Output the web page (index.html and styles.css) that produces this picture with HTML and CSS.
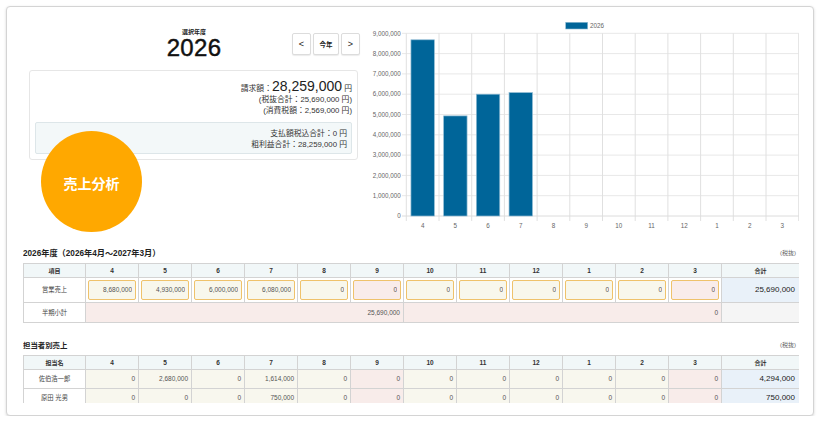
FILE: index.html
```html
<!DOCTYPE html>
<html lang="ja">
<head>
<meta charset="utf-8">
<title>売上分析</title>
<link rel="stylesheet" href="styles.css">
</head>
<body>
<div class="card">
  <div class="content">
    <section class="top">
      <div class="left">
        <div class="yearhead">
          <div></div>
          <div class="yeartitle">
            <div class="ylabel">選択年度</div>
            <div class="year">2026</div>
          </div>
          <div class="btns">
            <button class="btn arrow">&lt;</button><button class="btn today">今年</button><button class="btn arrow">&gt;</button>
          </div>
        </div>
        <div class="summary">
          <div class="bigline"><span class="lbl">請求額：</span><span class="big">28,259,000</span><span class="yen"> 円</span></div>
          <div class="sline">(税抜合計：25,690,000 円)</div>
          <div class="sline">(消費税額：2,569,000 円)</div>
          <div class="inner">
            <div class="sline">支払額税込合計：0 円</div>
            <div class="sline">粗利益合計：28,259,000 円</div>
          </div>
        </div>
        <div class="badge">売上分析</div>
      </div>
      <svg class="chart" width="439" height="239" viewBox="360 7 439 239" xmlns="http://www.w3.org/2000/svg">
        <g class="legend">
          <rect x="565.7" y="22.3" width="22" height="6.7" fill="#006599" stroke="#8fbbd3" stroke-width="0.6"/>
          <text x="590" y="27.9" class="lt">2026</text>
        </g>
        <g stroke="#e8e8e8" stroke-width="1">
          <line x1="402" y1="33.3" x2="798.7" y2="33.3"/>
          <line x1="402" y1="53.6" x2="798.7" y2="53.6"/>
          <line x1="402" y1="73.9" x2="798.7" y2="73.9"/>
          <line x1="402" y1="94.2" x2="798.7" y2="94.2"/>
          <line x1="402" y1="114.5" x2="798.7" y2="114.5"/>
          <line x1="402" y1="134.8" x2="798.7" y2="134.8"/>
          <line x1="402" y1="155.1" x2="798.7" y2="155.1"/>
          <line x1="402" y1="175.4" x2="798.7" y2="175.4"/>
          <line x1="402" y1="195.7" x2="798.7" y2="195.7"/>
        </g>
        <g stroke="#e0e0e0" stroke-width="1">
          <line x1="406.3" y1="33.3" x2="406.3" y2="221"/>
          <line x1="439.0" y1="33.3" x2="439.0" y2="221"/>
          <line x1="471.7" y1="33.3" x2="471.7" y2="221"/>
          <line x1="504.4" y1="33.3" x2="504.4" y2="221"/>
          <line x1="537.1" y1="33.3" x2="537.1" y2="221"/>
          <line x1="569.8" y1="33.3" x2="569.8" y2="221"/>
          <line x1="602.5" y1="33.3" x2="602.5" y2="221"/>
          <line x1="635.2" y1="33.3" x2="635.2" y2="221"/>
          <line x1="667.9" y1="33.3" x2="667.9" y2="221"/>
          <line x1="700.6" y1="33.3" x2="700.6" y2="221"/>
          <line x1="733.3" y1="33.3" x2="733.3" y2="221"/>
          <line x1="766.0" y1="33.3" x2="766.0" y2="221"/>
          <line x1="798.7" y1="33.3" x2="798.7" y2="221"/>
        </g>
        <line x1="402" y1="216" x2="798.7" y2="216" stroke="#dcdcdc" stroke-width="1"/>
        <g class="yl" text-anchor="end">
          <text x="400.7" y="218.2">0</text>
          <text x="400.7" y="197.9">1,000,000</text>
          <text x="400.7" y="177.6">2,000,000</text>
          <text x="400.7" y="157.3">3,000,000</text>
          <text x="400.7" y="137.0">4,000,000</text>
          <text x="400.7" y="116.7">5,000,000</text>
          <text x="400.7" y="96.4">6,000,000</text>
          <text x="400.7" y="76.1">7,000,000</text>
          <text x="400.7" y="55.8">8,000,000</text>
          <text x="400.7" y="35.5">9,000,000</text>
        </g>
        <g class="xl" text-anchor="middle">
          <text x="422.65" y="227.6">4</text>
          <text x="455.35" y="227.6">5</text>
          <text x="488.05" y="227.6">6</text>
          <text x="520.75" y="227.6">7</text>
          <text x="553.45" y="227.6">8</text>
          <text x="586.15" y="227.6">9</text>
          <text x="618.85" y="227.6">10</text>
          <text x="651.55" y="227.6">11</text>
          <text x="684.25" y="227.6">12</text>
          <text x="716.95" y="227.6">1</text>
          <text x="749.65" y="227.6">2</text>
          <text x="782.35" y="227.6">3</text>
        </g>
        <g fill="#006599" stroke="#8fbbd3" stroke-width="0.7">
          <rect x="410.95" y="39.8" width="23.4" height="176.2"/>
          <rect x="443.65" y="115.9" width="23.4" height="100.1"/>
          <rect x="476.35" y="94.2" width="23.4" height="121.8"/>
          <rect x="509.05" y="92.6" width="23.4" height="123.4"/>
        </g>
      </svg>
    </section>

    <section class="block">
      <div class="sec-head">
        <div class="sec-title">2026年度（2026年4月～2027年3月）</div>
        <div class="note">(税抜)</div>
      </div>
      <table class="grid">
        <colgroup><col class="c0"><col class="m"><col class="m"><col class="m"><col class="m"><col class="m"><col class="m"><col class="m"><col class="m"><col class="m"><col class="m"><col class="m"><col class="m"><col class="t"></colgroup>
        <thead>
          <tr class="hr"><th>項目</th><th>4</th><th>5</th><th>6</th><th>7</th><th>8</th><th>9</th><th>10</th><th>11</th><th>12</th><th>1</th><th>2</th><th>3</th><th>合計</th></tr>
        </thead>
        <tbody>
          <tr class="r-in">
            <td class="lbl">営業売上</td>
            <td class="ic"><input class="inp" value="8,680,000" readonly></td>
            <td class="ic"><input class="inp" value="4,930,000" readonly></td>
            <td class="ic"><input class="inp" value="6,000,000" readonly></td>
            <td class="ic"><input class="inp" value="6,080,000" readonly></td>
            <td class="ic"><input class="inp" value="0" readonly></td>
            <td class="ic"><input class="inp pk" value="0" readonly></td>
            <td class="ic"><input class="inp" value="0" readonly></td>
            <td class="ic"><input class="inp" value="0" readonly></td>
            <td class="ic"><input class="inp" value="0" readonly></td>
            <td class="ic"><input class="inp" value="0" readonly></td>
            <td class="ic"><input class="inp" value="0" readonly></td>
            <td class="ic"><input class="inp pk" value="0" readonly></td>
            <td class="tot">25,690,000</td>
          </tr>
          <tr class="r-sub">
            <td class="lbl">半期小計</td>
            <td class="num pkc" colspan="6">25,690,000</td>
            <td class="num pkc" colspan="6">0</td>
            <td class="gry"></td>
          </tr>
        </tbody>
      </table>
    </section>

    <section class="block second">
      <div class="sec-head">
        <div class="sec-title">担当者別売上</div>
        <div class="note">(税抜)</div>
      </div>
      <table class="grid">
        <colgroup><col class="c0"><col class="m"><col class="m"><col class="m"><col class="m"><col class="m"><col class="m"><col class="m"><col class="m"><col class="m"><col class="m"><col class="m"><col class="m"><col class="t"></colgroup>
        <thead>
          <tr class="hr"><th>担当名</th><th>4</th><th>5</th><th>6</th><th>7</th><th>8</th><th>9</th><th>10</th><th>11</th><th>12</th><th>1</th><th>2</th><th>3</th><th>合計</th></tr>
        </thead>
        <tbody>
          <tr class="r-p">
            <td class="lbl">佐伯浩一郎</td>
            <td class="num cr">0</td><td class="num cr">2,680,000</td><td class="num cr">0</td><td class="num cr">1,614,000</td><td class="num cr">0</td><td class="num pkc">0</td>
            <td class="num cr">0</td><td class="num cr">0</td><td class="num cr">0</td><td class="num cr">0</td><td class="num cr">0</td><td class="num pkc">0</td>
            <td class="tot">4,294,000</td>
          </tr>
          <tr class="r-p">
            <td class="lbl">原田 光男</td>
            <td class="num cr">0</td><td class="num cr">0</td><td class="num cr">0</td><td class="num cr">750,000</td><td class="num cr">0</td><td class="num pkc">0</td>
            <td class="num cr">0</td><td class="num cr">0</td><td class="num cr">0</td><td class="num cr">0</td><td class="num cr">0</td><td class="num pkc">0</td>
            <td class="tot">750,000</td>
          </tr>
        </tbody>
      </table>
    </section>
  </div>
</div>
</body>
</html>
```

FILE: styles.css
```css
* { box-sizing: border-box; }
html, body { margin: 0; padding: 0; background: #fff; }
body {
  font-family: "Liberation Sans", "Noto Sans CJK JP", sans-serif;
  color: #333;
}

.card {
  margin: 6px 0 0 6px;
  width: 808px;
  height: 410px;
  border: 1px solid #d4d4d4;
  border-radius: 4px;
  box-shadow: 0 1px 3px rgba(0,0,0,0.16);
  padding: 0 14px 12px 16px;
  background: #fff;
}
.content { height: 100%; overflow: hidden; }

/* top area */
.top { display: flex; height: 239px; }
.left { width: 337px; flex: none; position: relative; padding-top: 21px; }
.yearhead {
  display: grid;
  grid-template-columns: 1fr auto 1fr;
  align-items: center;
  padding-left: 5px;
}
.yeartitle { text-align: center; }
.ylabel { font-size: 6px; line-height: 8px; font-weight: bold; color: #222; }
.year {
  font-size: 24px;
  line-height: 24px;
  color: #111;
  letter-spacing: 0.3px;
  -webkit-text-stroke: 0.45px #111;
}
.btns { justify-self: end; display: flex; gap: 2px; }
.btn {
  height: 22px;
  border: 1px solid #dcdcdc;
  border-radius: 2px;
  background: #fff;
  box-shadow: 0 1px 1px rgba(0,0,0,0.08);
  font-family: "Liberation Sans", "Noto Sans CJK JP", sans-serif;
  color: #222;
  padding: 0;
  margin: 0;
}
.btn.arrow { width: 19px; font-size: 9px; }
.btn.today { width: 26px; font-size: 6.5px; font-weight: bold; }

.summary {
  margin: 10px 2px 0 6px;
  border: 1px solid #e6e6e6;
  border-radius: 3px;
  padding: 7px 5px 5px;
  text-align: right;
  color: #333;
}
.bigline { height: 16px; line-height: 16px; font-size: 7.8px; white-space: nowrap; }
.bigline .big { font-size: 14px; line-height: 16px; color: #222; }
.sline { font-size: 7.8px; line-height: 11px; white-space: nowrap; }
.inner {
  margin-top: 6px;
  background: #f3f8f9;
  border: 1px solid #dde6e9;
  border-radius: 2px;
  padding: 5px 4px 3px;
}

.badge {
  position: absolute;
  left: 18px;
  top: 124px;
  width: 101px;
  height: 101px;
  border-radius: 50%;
  background: #ffa800;
  color: #fff;
  font-family: "Noto Sans CJK JP", sans-serif;
  font-weight: bold;
  font-size: 14px;
  display: flex;
  align-items: center;
  justify-content: center;
  padding-top: 3px;
}

.chart { display: block; flex: none; }
.chart text { font-family: "Liberation Sans", sans-serif; font-size: 6.3px; fill: #666; }

/* tables */
.sec-head {
  display: flex;
  justify-content: space-between;
  align-items: center;
  height: 12px;
  margin-bottom: 4.5px;
}
.sec-title { font-size: 8.2px; font-weight: bold; color: #222; }
.note { font-size: 6px; color: #666; padding-right: 3px; }
.second .sec-title { font-size: 7.4px; }
.second { margin-top: 15.7px; }

.grid {
  width: 776px;
  table-layout: fixed;
  border-collapse: collapse;
  font-size: 6.5px;
  color: #555;
}
.grid col.c0 { width: 62px; }
.grid col.m { width: 53px; }
.grid col.t { width: 78px; }
.grid th, .grid td {
  border: 1px solid #d3d3d3;
  padding: 0;
}
.grid th {
  background: #f1f7f8;
  font-weight: bold;
  color: #333;
  text-align: center;
  height: 14px;
  font-size: 6.5px;
}
.grid th:first-child, .grid th:last-child { font-size: 6px; }
.grid td.lbl { background: #fff; text-align: center; color: #444; font-size: 6.3px; }
.r-in td { height: 23px; }
.r-sub td { height: 20px; }
.r-p td { height: 19px; }
.grid td.ic { padding: 2px 2px; }
.inp {
  display: block;
  width: 100%;
  height: 20px;
  margin: 0;
  border: 1px solid #efc26b;
  border-radius: 2px;
  background: #f8f7ec;
  text-align: right;
  padding: 0 3px;
  font-family: "Liberation Sans", sans-serif;
  font-size: 6.5px;
  color: #555;
  outline: none;
}
.inp.pk { background: #f9ecea; }
.grid td.num { text-align: right; padding-right: 3px; }
.grid td.pkc { background: #f8ecea; }
.grid td.cr { background: #f8f7ee; }
.grid td.gry { background: #f5f5f5; }
.grid td.tot {
  background: #e9f1f9;
  text-align: right;
  padding-right: 4px;
  font-size: 8px;
  color: #222;
}
```
